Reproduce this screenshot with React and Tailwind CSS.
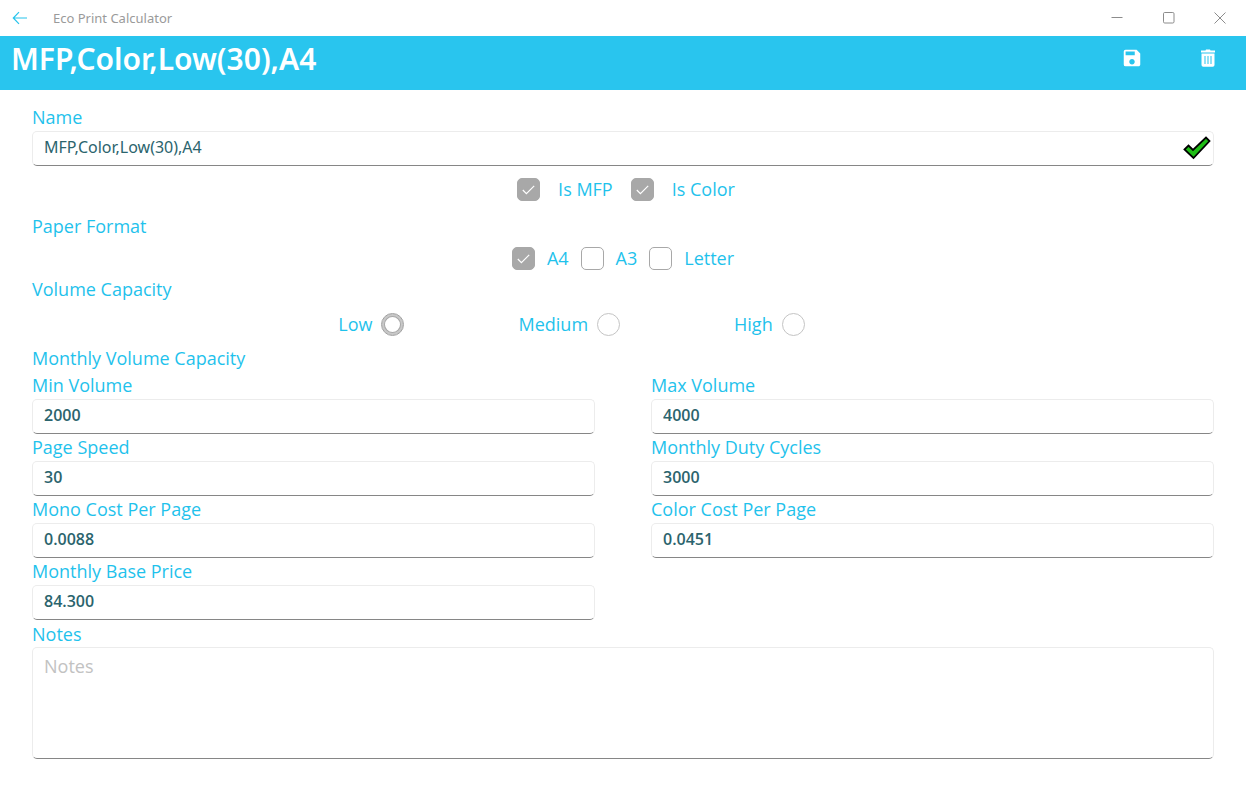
import React, { useState } from 'react';
import { MdSave } from 'react-icons/md';

const VOLUMES = ['Low', 'Medium', 'High'];

const FIELDS = [
  { id: 'minVolume', label: 'Min Volume' },
  { id: 'maxVolume', label: 'Max Volume' },
  { id: 'pageSpeed', label: 'Page Speed' },
  { id: 'dutyCycles', label: 'Monthly Duty Cycles' },
  { id: 'monoCost', label: 'Mono Cost Per Page' },
  { id: 'colorCost', label: 'Color Cost Per Page' },
  { id: 'basePrice', label: 'Monthly Base Price' },
];

const BOX = 'block w-full rounded-[5px] border border-[#ececec] border-b-[#868686] bg-white px-[11px] text-[#2b646d] outline-none';

function CheckBox({ label, checked, onChange, className }) {
  return (
    <label className={`flex items-center ${className}`}>
      <span className="relative flex">
        <input
          type="checkbox"
          checked={checked}
          onChange={onChange}
          className="size-[23px] appearance-none rounded-[5px] border border-[#a8a8a8] bg-white checked:bg-[#a8a8a8]"
        />
        {checked && (
          <svg viewBox="0 0 23 23" className="pointer-events-none absolute inset-0 size-full" fill="none" stroke="#fff" strokeWidth="1.2">
            <path d="M5.8 12l3.6 3.6 7.8-7.8" />
          </svg>
        )}
      </span>
      {label}
    </label>
  );
}

export default function App() {
  const [name, setName] = useState('MFP,Color,Low(30),A4');
  const [flags, setFlags] = useState({ mfp: true, color: true, A4: true, A3: false, Letter: false });
  const [volume, setVolume] = useState('Low');
  const [notes, setNotes] = useState('');
  const [values, setValues] = useState({
    minVolume: '2000',
    maxVolume: '4000',
    pageSpeed: '30',
    dutyCycles: '3000',
    monoCost: '0.0088',
    colorCost: '0.0451',
    basePrice: '84.300',
  });

  const toggle = key => setFlags(prev => ({ ...prev, [key]: !prev[key] }));

  return (
    <div className="min-h-screen bg-white font-['Open_Sans',sans-serif] text-[18px] leading-[27px] text-[#1fc2ec]">
      {/* Window title bar */}
      <div className="flex h-9 items-center text-[#8c8c8c]">
        <button type="button" aria-label="Back" className="flex h-9 w-[53px] items-center pl-3 text-[#27c4ec]">
          <svg width="16" height="14" viewBox="0 0 16 14" fill="none" stroke="currentColor" strokeWidth="1.2">
            <path d="M15 7H1.5M7 1.2L1.3 7 7 12.8" />
          </svg>
        </button>
        <span className="flex-1 font-['Noto_Sans',sans-serif] text-[13px] leading-4 text-[#9a9a9a]">Eco Print Calculator</span>
        <button type="button" aria-label="Minimize" className="flex h-9 w-[52px] items-center justify-center">
          <svg width="12" height="12" viewBox="0 0 12 12" stroke="currentColor"><path d="M0.5 5.5h11" /></svg>
        </button>
        <button type="button" aria-label="Maximize" className="flex h-9 w-[51px] items-center justify-center">
          <svg width="12" height="12" viewBox="0 0 12 12" fill="none" stroke="currentColor"><rect x="0.5" y="0.5" width="10.5" height="10.5" rx="1.2" /></svg>
        </button>
        <button type="button" aria-label="Close" className="flex h-9 w-[52px] items-center justify-center">
          <svg width="12" height="12" viewBox="0 0 12 12" stroke="currentColor"><path d="M0.5 0.5l11 11M11.5 0.5l-11 11" /></svg>
        </button>
      </div>

      <header className="flex h-[54px] items-center bg-[#29c5ee] pb-2 text-white">
        <h1 className="flex-1 pl-[11px] font-['Noto_Sans',sans-serif] text-[30px] font-semibold leading-10">MFP,Color,Low(30),A4</h1>
        <button type="button" aria-label="Save" className="flex w-[76px] justify-center pb-0.5">
          <MdSave size={22} />
        </button>
        <button type="button" aria-label="Delete" className="flex w-[76px] justify-center pb-0.5">
          <svg width="16" height="18" viewBox="0 0 16 18">
            <path fill="currentColor" d="M1 1.5h4.5L6 .5h4l.5 1H15V3.500H1zM1.500 4.500h13V16a1.800 1.800 0 0 1-1.800 1.800H3.300A1.800 1.800 0 0 1 1.500 16z" />
            <path stroke="#29c5ee" strokeWidth="1" d="M5 7v8M8 7v8M11 7v8" />
          </svg>
        </button>
      </header>

      <form className="flex flex-col px-8 pt-3.5" onSubmit={e => e.preventDefault()}>
        <label htmlFor="name">Name</label>
        <div className="relative">
          <input
            id="name"
            value={name}
            onChange={e => setName(e.target.value)}
            className={`${BOX} h-[35px] pr-10 pb-1 font-['Noto_Sans',sans-serif] text-[16px]`}
          />
          <svg viewBox="0 0 28 24" className="pointer-events-none absolute right-[3px] top-[5px] h-6 w-7">
            <path d="M1.500 13.500L5.500 9.500 10 14 23 1.500 26.500 5 10.500 22z" fill="#1fbe16" stroke="#000" strokeWidth="1.800" />
          </svg>
        </div>

        <div className="flex h-[47px] items-center justify-center gap-[18px] pl-1.5">
          <CheckBox label="Is MFP" checked={flags.mfp} onChange={() => toggle('mfp')} className="gap-[18px]" />
          <CheckBox label="Is Color" checked={flags.color} onChange={() => toggle('color')} className="gap-[18px]" />
        </div>

        <p>Paper Format</p>
        <div className="flex h-9 items-center justify-center gap-3">
          {['A4', 'A3', 'Letter'].map(format => (
            <CheckBox key={format} label={format} checked={flags[format]} onChange={() => toggle(format)} className="gap-3" />
          ))}
        </div>

        <p>Volume Capacity</p>
        <div className="flex h-[42px] items-center justify-center gap-[114px] pr-[103px]">
          {VOLUMES.map(level => (
            <label key={level} className="flex items-center gap-[9px]">
              {level}
              <input
                type="radio"
                name="volume"
                checked={volume === level}
                onChange={() => setVolume(level)}
                className="size-[23px] appearance-none rounded-full border border-[#c4c4c4] bg-white checked:border-[#a0a0a0] checked:shadow-[inset_0_0_0_2px_#c8c8c8,inset_0_0_0_3px_#a8a8a8]"
              />
            </label>
          ))}
        </div>

        <p>Monthly Volume Capacity</p>
        <div className="grid grid-cols-2 gap-x-14 pb-px">
          {FIELDS.map(({ id, label }) => (
            <div key={id}>
              <label htmlFor={id} className="block">{label}</label>
              <input
                id={id}
                value={values[id]}
                onChange={e => setValues(prev => ({ ...prev, [id]: e.target.value }))}
                className={`${BOX} h-[35px] pb-1 text-[16px] font-semibold`}
              />
            </div>
          ))}
        </div>

        <label htmlFor="notes" className="leading-[26px]">Notes</label>
        <textarea
          id="notes"
          value={notes}
          placeholder="Notes"
          onChange={e => setNotes(e.target.value)}
          className={`${BOX} h-28 resize-none pt-[5px] placeholder:text-[#c2c2c2]`}
        />
      </form>
    </div>
  );
}
